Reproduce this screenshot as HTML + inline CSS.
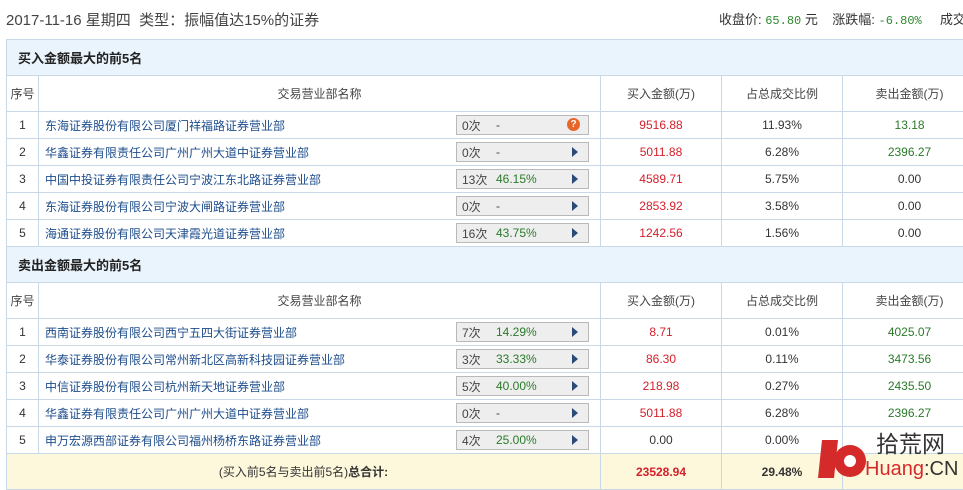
<!DOCTYPE html><html><head><meta charset="utf-8"><style>
body{margin:0;width:963px;height:489px;overflow:hidden;background:#fff;font-family:"Liberation Sans","Noto Sans CJK SC",sans-serif;font-size:12px;color:#333;position:relative}
.t{position:absolute;left:6px;top:9px;font-size:15px;color:#444}
.r{position:absolute;left:719px;top:9px;font-size:13px;color:#333;white-space:nowrap}
.g{color:#2f8a2f;font-family:"Liberation Mono",monospace;font-size:12px}
table{position:absolute;left:6px;border-collapse:collapse;width:970px;table-layout:fixed}
td{border:1px solid #c9d8e6;text-align:center;padding:0;height:26px;white-space:nowrap;overflow:hidden}
.sh td{background:#eaf4fc;height:35px;text-align:left;padding-left:11px;font-weight:bold;font-size:13px;color:#222}
.ch td{height:35px;color:#444}
.n{text-align:left;padding-left:6px;color:#1d4d8c}
.red{color:#d4202c}.grn{color:#2a7a2a}
.b{display:flex;align-items:center;width:131px;height:18px;border:1px solid #b9b9b9;background:#eee;margin-left:auto;margin-right:11px;font-size:12px;color:#444;position:relative}
.b span{padding-left:5px;width:34px;text-align:left}
.b i{font-style:normal;color:#2a7a2a}
.b:after{content:"";position:absolute;right:10px;top:4px;border-left:6px solid #2b4a78;border-top:5px solid transparent;border-bottom:5px solid transparent}
.b.q:after{display:none}
.qi{position:absolute;right:8px;top:2px;width:13px;height:13px;border-radius:50%;background:#e8662a;color:#fff;font-size:10px;font-weight:bold;line-height:13px;text-align:center}
.tot td{background:#fdf8dc;height:35px}
</style></head><body>
<div class="t">2017-11-16 星期四&nbsp; 类型：振幅值达15%的证券</div>
<div class="r">收盘价: <span class="g">65.80</span> 元 &nbsp;&nbsp;&nbsp;涨跌幅: <span class="g">-6.80%</span> &nbsp;&nbsp;&nbsp;&nbsp;成交</div>
<table style="top:39px">
<colgroup><col style="width:32px"><col style="width:562px"><col style="width:121px"><col style="width:121px"><col style="width:134px"></colgroup>
<tr class="sh"><td colspan="5">买入金额最大的前5名</td></tr>
<tr class="ch"><td>序号</td><td>交易营业部名称</td><td>买入金额(万)</td><td>占总成交比例</td><td>卖出金额(万)</td></tr>
<tr><td>1</td><td class="n"><div style="display:flex;align-items:center">东海证券股份有限公司厦门祥福路证券营业部<div class="b q"><span>0次</span><i style="color:#444">-</i><b class="qi">?</b></div></div></td><td class="red">9516.88</td><td>11.93%</td><td class="grn">13.18</td></tr>
<tr><td>2</td><td class="n"><div style="display:flex;align-items:center">华鑫证券有限责任公司广州广州大道中证券营业部<div class="b"><span>0次</span><i style="color:#444">-</i></div></div></td><td class="red">5011.88</td><td>6.28%</td><td class="grn">2396.27</td></tr>
<tr><td>3</td><td class="n"><div style="display:flex;align-items:center">中国中投证券有限责任公司宁波江东北路证券营业部<div class="b"><span>13次</span><i>46.15%</i></div></div></td><td class="red">4589.71</td><td>5.75%</td><td>0.00</td></tr>
<tr><td>4</td><td class="n"><div style="display:flex;align-items:center">东海证券股份有限公司宁波大闸路证券营业部<div class="b"><span>0次</span><i style="color:#444">-</i></div></div></td><td class="red">2853.92</td><td>3.58%</td><td>0.00</td></tr>
<tr><td>5</td><td class="n"><div style="display:flex;align-items:center">海通证券股份有限公司天津霞光道证券营业部<div class="b"><span>16次</span><i>43.75%</i></div></div></td><td class="red">1242.56</td><td>1.56%</td><td>0.00</td></tr>
<tr class="sh"><td colspan="5">卖出金额最大的前5名</td></tr>
<tr class="ch"><td>序号</td><td>交易营业部名称</td><td>买入金额(万)</td><td>占总成交比例</td><td>卖出金额(万)</td></tr>
<tr><td>1</td><td class="n"><div style="display:flex;align-items:center">西南证券股份有限公司西宁五四大街证券营业部<div class="b"><span>7次</span><i>14.29%</i></div></div></td><td class="red">8.71</td><td>0.01%</td><td class="grn">4025.07</td></tr>
<tr><td>2</td><td class="n"><div style="display:flex;align-items:center">华泰证券股份有限公司常州新北区高新科技园证券营业部<div class="b"><span>3次</span><i>33.33%</i></div></div></td><td class="red">86.30</td><td>0.11%</td><td class="grn">3473.56</td></tr>
<tr><td>3</td><td class="n"><div style="display:flex;align-items:center">中信证券股份有限公司杭州新天地证券营业部<div class="b"><span>5次</span><i>40.00%</i></div></div></td><td class="red">218.98</td><td>0.27%</td><td class="grn">2435.50</td></tr>
<tr><td>4</td><td class="n"><div style="display:flex;align-items:center">华鑫证券有限责任公司广州广州大道中证券营业部<div class="b"><span>0次</span><i style="color:#444">-</i></div></div></td><td class="red">5011.88</td><td>6.28%</td><td class="grn">2396.27</td></tr>
<tr><td>5</td><td class="n"><div style="display:flex;align-items:center">申万宏源西部证券有限公司福州杨桥东路证券营业部<div class="b"><span>4次</span><i>25.00%</i></div></div></td><td>0.00</td><td>0.00%</td><td></td></tr>
<tr class="tot"><td colspan="2">(买入前5名与卖出前5名)<b>总合计:</b></td><td class="red"><b>23528.94</b></td><td><b>29.48%</b></td><td></td></tr>
</table>
<div style="position:absolute;left:820px;top:440px;width:16px;height:38px;background:#d42a2a;transform:skewX(-6deg)"></div>
<div style="position:absolute;left:834px;top:445px;width:32px;height:32px;border-radius:50%;background:#d42a2a"></div>
<div style="position:absolute;left:844px;top:455px;width:12px;height:12px;border-radius:50%;background:#fff"></div>
<div style="position:absolute;left:876px;top:430px;font-size:23px;color:#333;line-height:28px">拾荒网</div>
<div style="position:absolute;left:865px;top:457px;font-size:20px;color:#d42a2a;line-height:24px">Huang<span style="color:#333">:CN</span></div>
</body></html>
